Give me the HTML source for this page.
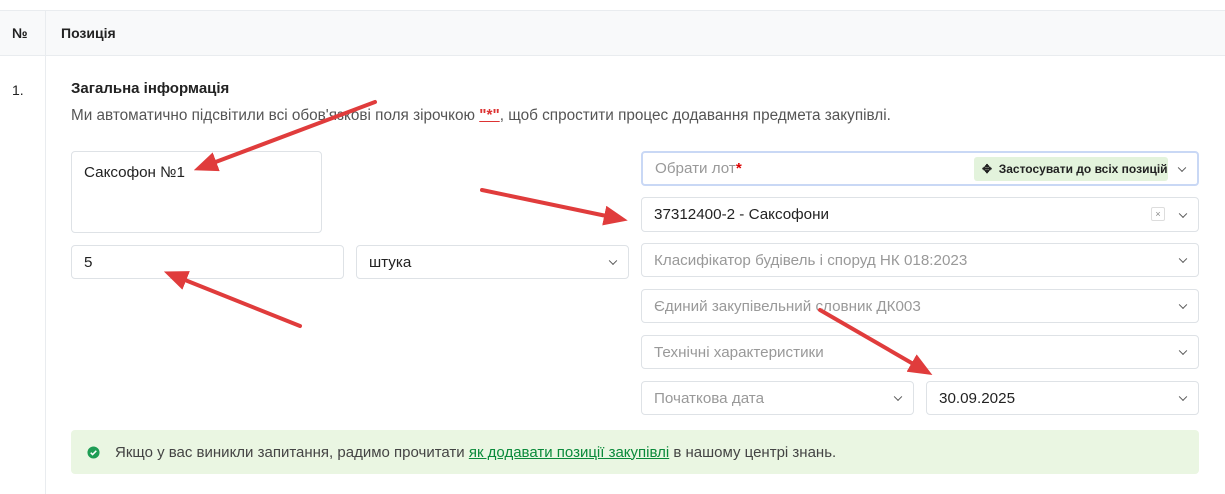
<!DOCTYPE html>
<html><head><meta charset="utf-8"><style>
*{box-sizing:border-box;margin:0;padding:0}
body{width:1225px;height:494px;overflow:hidden;background:#fff;font-family:"Liberation Sans","Noto Sans CJK SC",sans-serif;font-size:14px;color:#222;position:relative}
.abs{position:absolute}
.hdr{left:0;top:10px;width:1225px;height:46px;background:#f8f9fa;border-top:1px solid #e9ecef;border-bottom:1px solid #e9ecef}
.vl{left:45px;top:10px;width:1px;height:484px;background:#e9ecef}
.f{position:absolute;border:1px solid #dee2e6;border-radius:4px;background:#fff;display:flex;align-items:center;padding-left:12px;font-size:15.2px;color:#999}
.f.v{color:#222}
.ch{position:absolute;right:12px;top:50%;width:6px;height:6px;border-right:1.3px solid #555;border-bottom:1.3px solid #555;transform:translateY(-70%) rotate(45deg)}
</style></head><body>
<div class="abs hdr"></div>
<div class="abs vl"></div>
<div class="abs" style="left:12px;top:25px;font-weight:bold;font-size:14px">№</div>
<div class="abs" style="left:61px;top:25px;font-weight:bold;font-size:14px">Позиція</div>
<div class="abs" style="left:12px;top:82px;font-size:14px">1.</div>
<div class="abs" style="left:71px;top:80px;font-weight:bold;font-size:15px">Загальна інформація</div>
<div class="abs" style="left:71px;top:107px;font-size:15.3px;color:#555">Ми автоматично підсвітили всі обов'язкові поля зірочкою <span style="color:#d33;font-weight:bold;text-decoration:underline">"*"</span>, щоб спростити процес додавання предмета закупівлі.</div>

<div class="f v" style="left:71px;top:151px;width:251px;height:82px;align-items:flex-start;padding-top:12px">Саксофон №1</div>
<div class="f v" style="left:71px;top:245px;width:273px;height:34px">5</div>
<div class="f v" style="left:356px;top:245px;width:273px;height:34px">штука<span class="ch"></span></div>

<div class="f" style="left:641px;top:151px;width:558px;height:35px;border:2px solid #c9d8f5">Обрати лот<span style="color:#d00;font-weight:bold">*</span>
<span style="position:absolute;left:331px;top:4px;height:24px;width:194px;background:#e3f3dc;border-radius:3px;color:#222;font-size:12px;font-weight:bold;display:flex;align-items:center;padding-left:8px;white-space:nowrap">✥&nbsp; Застосувати до всіх позицій</span><span class="ch"></span></div>
<div class="f v" style="left:641px;top:197px;width:558px;height:35px">37312400-2 - Саксофони<span style="position:absolute;right:33px;top:9px;width:14px;height:14px;border:1px solid #ddd;border-radius:2px;font-size:9px;color:#888;text-align:center;line-height:12px">×</span><span class="ch"></span></div>
<div class="f" style="left:641px;top:243px;width:558px;height:34px">Класифікатор будівель і споруд НК 018:2023<span class="ch"></span></div>
<div class="f" style="left:641px;top:289px;width:558px;height:34px">Єдиний закупівельний словник ДК003<span class="ch"></span></div>
<div class="f" style="left:641px;top:335px;width:558px;height:34px">Технічні характеристики<span class="ch"></span></div>
<div class="f" style="left:641px;top:381px;width:273px;height:34px">Початкова дата<span class="ch"></span></div>
<div class="f v" style="left:926px;top:381px;width:273px;height:34px">30.09.2025<span class="ch"></span></div>

<div class="abs" style="left:71px;top:430px;width:1128px;height:44px;background:#eaf6e2;border-radius:4px;display:flex;align-items:center;padding-left:16px;font-size:15px;color:#444">
<svg width="13" height="13" viewBox="0 0 14 14" style="margin-right:15px"><circle cx="7" cy="7" r="6.5" fill="#1f9d55"/><path d="M4 7.2l2 2 4-4" stroke="#fff" stroke-width="1.6" fill="none"/></svg>
Якщо у вас виникли запитання, радимо прочитати&nbsp;<span style="color:#0a8a3a;text-decoration:underline">як додавати позиції закупівлі</span>&nbsp;в нашому центрі знань.</div>

<svg class="abs" style="left:0;top:0" width="1225" height="494">
<defs><marker id="a" markerWidth="6" markerHeight="5" refX="3" refY="2.5" orient="auto"><path d="M0,0 L6,2.5 L0,5z" fill="#e03c3c"/></marker></defs>
<g stroke="#e03c3c" stroke-width="4" fill="none" stroke-linecap="round" marker-end="url(#a)">
<line x1="375" y1="102" x2="205" y2="166"/>
<line x1="482" y1="190" x2="616" y2="218"/>
<line x1="300" y1="326" x2="175" y2="276"/>
<line x1="820" y1="310" x2="922" y2="369"/>
</g></svg>
</body></html>
